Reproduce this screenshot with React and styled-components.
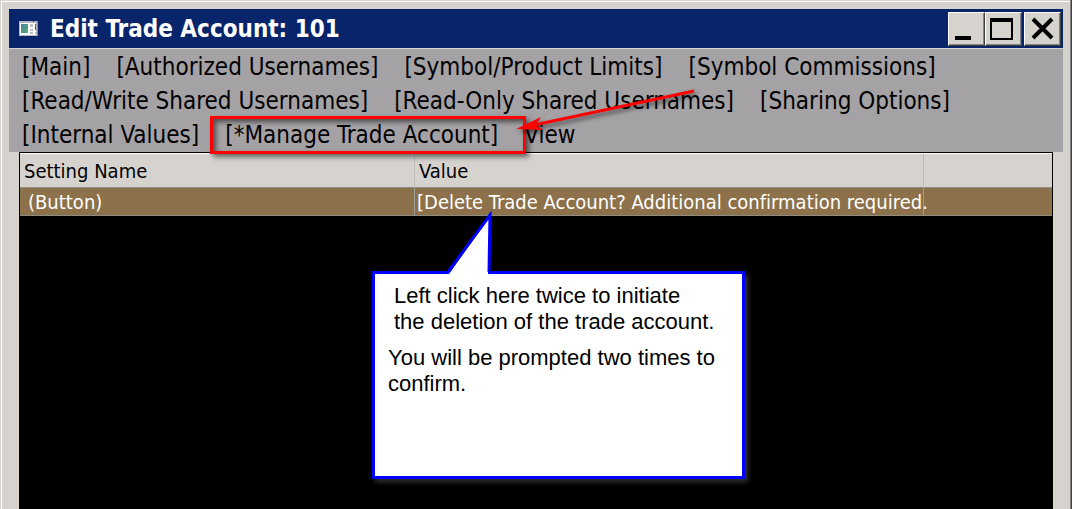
import React from "react";
import styled, { createGlobalStyle, css } from "styled-components";

const UI_FONT = '"DejaVu Sans Condensed", "DejaVu Sans", sans-serif';

const GlobalStyle = createGlobalStyle`
  *, *::before, *::after { box-sizing: border-box; }
  body { margin: 0; background: #d6d3ce; }
  button { margin: 0; font: inherit; color: inherit; text-align: left; cursor: pointer; }
`;

const Window = styled.main`
  display: flex;
  flex-direction: column;
  min-height: 100vh;
  padding: 9px;
  padding-bottom: 0;
  overflow: hidden;
  background: #d6d3ce;
  color: #000;
  font-family: ${UI_FONT};
  font-stretch: condensed;
  font-variant-ligatures: none;
  box-shadow: inset -1px 0 #404040, inset -2px 0 #848284, inset 1px 1px #d6d3ce, inset 2px 2px #fff;
`;

const TitleBar = styled.header`
  display: flex;
  align-items: center;
  height: 39px;
  padding: 0 2px 0 10px;
  background: #08246b;
  color: #fff;
`;

const Title = styled.h1`
  flex: 1;
  margin: 0 0 0 12px;
  font-size: 24px;
  line-height: 40px;
  font-weight: 700;
  white-space: nowrap;
`;

const WindowButtons = styled.div`
  display: flex;
`;

const WindowButton = styled.button`
  width: 37px;
  height: 34px;
  margin-left: ${(p) => (p.$apart ? "2px" : "0")};
  padding: 0;
  border: 1px solid;
  border-color: #fff #404040 #404040 #fff;
  box-shadow: inset -1px -1px #848284;
  background: #d6d3ce;
  svg { display: block; }
`;

const Menu = styled.nav`
  display: flex;
  flex-wrap: wrap;
  column-gap: 26px;
  margin-top: 1px;
  padding: 1px 13px 0;
  background: #a5a2a5;
`;

const MenuItem = styled.button`
  position: relative;
  padding: 0;
  border: 0;
  background: none;
  font-size: 24px;
  line-height: 34px;
  white-space: nowrap;
`;

const Highlight = styled.span`
  position: absolute;
  z-index: 1;
  inset: -2px -28px -2px -15px;
  border: 3px solid #f00;
  box-shadow: 3px 3px 5px #0008, inset 3px 3px 5px #0008;
  pointer-events: none;
`;

const Arrow = styled.svg`
  position: absolute;
  z-index: 2;
  left: 100%;
  bottom: -1px;
  margin-left: 14px;
  overflow: visible;
  filter: drop-shadow(2px 3px 2px #0008);
  pointer-events: none;
`;

const Panel = styled.section`
  flex: 1;
  margin: 0 10px;
  padding: 1px 1px 0;
  background: #000;
`;

const Settings = styled.table`
  width: 100%;
  table-layout: fixed;
  border-collapse: separate;
  border-spacing: 0;
  font-size: 20px;
`;

const NameColumn = styled.col`
  width: 395px;
`;

const ValueColumn = styled.col`
  width: 509px;
`;

const cell = css`
  padding: 0 4px;
  border-bottom: 1px solid #8c8e84;
  text-align: left;
  font-weight: 400;
  white-space: nowrap;
`;

const HeadCell = styled.th`
  ${cell}
  height: 35px;
  border-top: 1px solid #fff;
  border-right: ${(p) => (p.$last ? "0" : "1px solid #bdbebd")};
  background: #d6d3ce;
`;

const Cell = styled.td`
  ${cell}
  position: relative;
  z-index: ${(p) => (p.$raised ? 1 : 0)};
  height: 28px;
  padding: 0 0 0 ${(p) => (p.$indent ? "8px" : "2px")};
  border-right: ${(p) => (p.$last ? "0" : "1px solid #9c9e94")};
  background: #8c714a;
  color: #fff;
`;

const ValueButton = styled.button`
  display: block;
  padding: 0;
  border: 0;
  background: none;
  line-height: 26px;
  white-space: nowrap;
`;

const Callout = styled.aside`
  position: absolute;
  z-index: 3;
  top: 83px;
  left: -43px;
  width: 373px;
  height: 208px;
  padding: 9px 13px;
  border: 3px solid #00f;
  background: #fff;
  box-shadow: 3px 3px 5px #333;
  color: #000;
  font-family: "Liberation Sans", Arial, sans-serif;
  font-size: 22px;
  line-height: 26px;
  white-space: nowrap;
`;

const Pointer = styled.svg`
  position: absolute;
  left: 67px;
  bottom: 100%;
  overflow: visible;
`;

const Note = styled.p`
  margin: 0 0 10px;
  padding-left: ${(p) => (p.$indent ? "6px" : "0")};
`;

const AppIcon = () => (
  <svg width="19" height="16" viewBox="0 0 19 16" aria-hidden="true">
    <defs>
      <linearGradient id="screen" x1="0" y1="0" x2="1" y2="1">
        <stop offset="0" stopColor="#4f7fae" />
        <stop offset="1" stopColor="#4fae6c" />
      </linearGradient>
    </defs>
    <rect width="19" height="15" fill="#b5b6c0" />
    <rect x="1" y="2" width="16" height="12" fill="#fff" />
    <path d="M14 0h1v1h-1z" fill="#334" />
    <rect x="2" y="3" width="7" height="9" fill="url(#screen)" />
    <path d="M11 3h3v3h-3zM11 8h3v2h-3zM11 11h3v2h-3z" fill="#bfc2c4" />
    <path d="M16 3h1v6h-1z" fill="#2f7a62" />
    <path d="M16 11h1v2h-1z" fill="#c9ccd2" />
    <path d="M18 0h1v15h-1z" fill="#8a8c96" />
  </svg>
);

const GLYPHS = {
  Minimize: <path d="M6 23h16v4H6z" />,
  Maximize: <path fillRule="evenodd" d="M4 5h23v22H4zM6 9v16h19V9z" />,
  Close: <path d="M8 6L27 25M27 6L8 25" fill="none" stroke="#000" strokeWidth="4" />,
};

const ControlButton = ({ name, apart }) => (
  <WindowButton type="button" aria-label={name} $apart={apart}>
    <svg width="35" height="32" viewBox="0 0 35 32" aria-hidden="true">{GLYPHS[name]}</svg>
  </WindowButton>
);

const MENU = [
  "[Main]",
  "[Authorized Usernames]",
  "[Symbol/Product Limits]",
  "[Symbol Commissions]",
  "[Read/Write Shared Usernames]",
  "[Read-Only Shared Usernames]",
  "[Sharing Options]",
  "[Internal Values]",
  "[*Manage Trade Account]",
  "View",
];

export default function App() {
  return (
    <>
      <GlobalStyle />
      <Window>
        <TitleBar>
          <AppIcon />
          <Title>Edit Trade Account: 101</Title>
          <WindowButtons>
            <ControlButton name="Minimize" />
            <ControlButton name="Maximize" />
            <ControlButton name="Close" apart />
          </WindowButtons>
        </TitleBar>
        <Menu>
          {MENU.map((item) => (
            <MenuItem type="button" key={item}>
              {item}
              {item.startsWith("[*") && (
                <>
                  <Highlight />
                  <Arrow width="182" height="62" viewBox="0 0 182 62" aria-hidden="true">
                    <path d="M182 0L22 34" stroke="#f00" strokeWidth="3" />
                    <path d="M4 38L29 26L24 34L31 39Z" fill="#f00" />
                  </Arrow>
                </>
              )}
            </MenuItem>
          ))}
        </Menu>
        <Panel>
          <Settings>
            <colgroup>
              <NameColumn />
              <ValueColumn />
              <col />
            </colgroup>
            <thead>
              <tr>
                <HeadCell scope="col">Setting Name</HeadCell>
                <HeadCell scope="col">Value</HeadCell>
                <HeadCell $last />
              </tr>
            </thead>
            <tbody>
              <tr>
                <Cell $indent>(Button)</Cell>
                <Cell $raised>
                  <ValueButton type="button">
                    [Delete Trade Account? Additional confirmation required.
                  </ValueButton>
                  <Callout>
                    <Pointer width="54" height="60" viewBox="0 0 54 60" aria-hidden="true">
                      <path d="M7 60L48 2L46 60Z" fill="#fff" />
                      <path d="M6 58L48 1L47 58" fill="none" stroke="#00f" strokeWidth="3" />
                    </Pointer>
                    <Note $indent>
                      Left click here twice to initiate
                      <br />
                      the deletion of the trade account.
                    </Note>
                    <Note>
                      You will be prompted two times to
                      <br />
                      confirm.
                    </Note>
                  </Callout>
                </Cell>
                <Cell $last />
              </tr>
            </tbody>
          </Settings>
        </Panel>
      </Window>
    </>
  );
}
